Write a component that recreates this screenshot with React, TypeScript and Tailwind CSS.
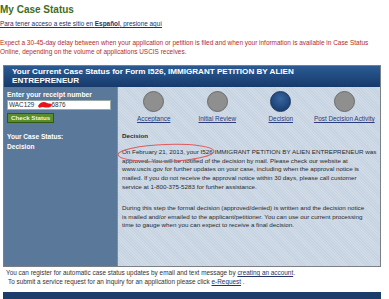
import React from 'react'

const stages = [
  { name: 'Acceptance', active: false },
  { name: 'Initial Review', active: false },
  { name: 'Decision', active: true },
  { name: 'Post Decision Activity', active: false },
]

function StageStep({ name, active }: { name: string; active: boolean }) {
  return (
    <div className="flex flex-col items-center">
      <div
        className={
          active
            ? 'h-[21px] w-[21px] rounded-full border border-[#1a355c] bg-[radial-gradient(circle_at_50%_35%,#3866a0,#1c4275_70%)]'
            : 'h-[21px] w-[21px] rounded-full border border-[#6a6a6a] bg-[#8f8f8f]'
        }
      />
      <a className="mt-[3px] text-[6.4px] leading-[8px] text-[#2a3d7c] underline">{name}</a>
    </div>
  )
}

export default function App() {
  return (
    <div className="h-[299px] w-[389px] overflow-hidden bg-white font-['Liberation_Sans',Arial,sans-serif] text-[#222]">
      {/* page heading */}
      <div className="pt-[3px]">
        <h1 className="text-[10px] font-bold leading-[14px] text-[#3f6d1c]">My Case Status</h1>
        <a className="mt-[3px] block text-[6.4px] leading-[8px] text-[#26336b] underline">
          Para tener acceso a este sitio en <b>Español</b>, presione aquí
        </a>
        <p className="mt-[10px] text-[6.45px] leading-[9px] text-[#b52a2a]">
          Expect a 30-45-day delay between when your application or petition is filed and when your information is available in Case Status Online, depending on the volume of applications USCIS receives.
        </p>
      </div>

      {/* status panel */}
      <div className="ml-[3px] mt-[9px] w-[378px] border border-[#7b7f86]">
        <div className="h-[21px] bg-[linear-gradient(#2b5a93,#173a6b)] pl-[8px] pr-[40px] pt-[2px] text-[8.1px] font-bold leading-[8.5px] text-white">
          Your Current Case Status for Form I526, IMMIGRANT PETITION BY ALIEN ENTREPRENEUR
        </div>
        <div className="flex h-[179px]">
          <div className="w-[114px] border-r border-[#7b8da3] bg-[#5a7899] px-[3px] pt-[3px] text-white">
            <div className="text-[6.8px] font-bold leading-[9px]">Enter your receipt number</div>
            <div className="relative mt-[1px] h-[10px] w-[104px] border border-[#9aa] bg-white pl-[1px] text-[6.4px] leading-[8.5px] text-[#333]">
              WAC129<span className="text-white">XXXX</span>6876
              <svg className="absolute left-[29px] top-[0px]" width="16" height="8" viewBox="0 0 16 8">
                <path d="M1 5 C3 1 7 0 10 2 C12 3 15 2 15 4 C14 7 9 7 6 6 C4 6 2 8 1 5 Z" fill="#e8141b" />
              </svg>
            </div>
            <button className="mt-[3px] block h-[10px] border border-[#2f5a16] bg-[#5b8d2c] px-[3px] text-[6.2px] font-bold leading-[8px] text-[#eef5e4]">
              Check Status
            </button>
            <div className="mt-[9px] text-[6.6px] font-bold leading-[9.5px]">
              Your Case Status:
              <br />
              Decision
            </div>
          </div>
          <div className="flex-1 bg-[repeating-linear-gradient(45deg,#c6d3e1_0px,#c6d3e1_1px,#d0dbe7_1px,#d0dbe7_2px)] pl-[4px] pt-[4px] text-[6.25px] leading-[8.8px] text-[#2a2a2a]">
            <div className="grid grid-cols-4 pr-[4px]">
              {stages.map((s) => (
                <StageStep key={s.name} name={s.name} active={s.active} />
              ))}
            </div>
            <div className="mt-[9px] font-bold">Decision</div>
            <p className="relative mt-[7px]">
              On February 21, 2013, your I526 IMMIGRANT PETITION BY ALIEN ENTREPRENEUR was approved. You will be notified of the decision by mail. Please check our website at www.uscis.gov for further updates on your case, including when the approval notice is mailed. If you do not receive the approval notice within 30 days, please call customer
              <br />
              service at 1-800-375-5283 for further assistance.
              {/* hand-drawn highlight around the approval date */}
              <svg className="absolute left-[-6px] top-[-6px]" width="102" height="22" viewBox="0 0 102 22">
                <ellipse cx="50" cy="11" rx="48" ry="8.5" transform="rotate(-2 50 11)" fill="none" stroke="#e05a5f" strokeWidth="1" />
              </svg>
            </p>
            <p className="mt-[12px]">
              During this step the formal decision (approved/denied) is written and the decision notice
              <br />
              is mailed and/or emailed to the applicant/petitioner. You can use our current processing
              <br />
              time to gauge when you can expect to receive a final decision.
            </p>
          </div>
        </div>
      </div>

      {/* footer notes */}
      <div className="pl-[6px] pt-[1px] text-[6.4px] leading-[9px] text-[#333]">
        <p>
          You can register for automatic case status updates by email and text message by{' '}
          <a className="text-[#26336b] underline">creating an account</a>.
        </p>
        <p className="pl-[2px]">
          To submit a service request for an inquiry for an application please click{' '}
          <a className="text-[#26336b] underline">e-Request</a> .
        </p>
      </div>
      <div className="ml-[3px] mt-[6px] h-[10px] w-[378px] bg-[#1c3c6a]" />
    </div>
  )
}
